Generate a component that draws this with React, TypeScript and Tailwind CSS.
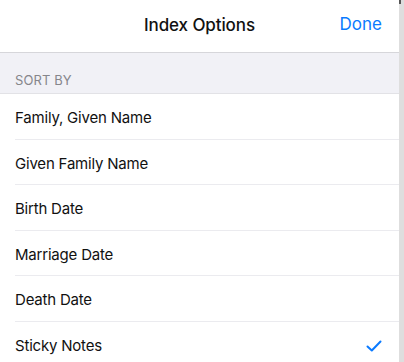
import React from "react";

const options = [
  "Family, Given Name",
  "Given Family Name",
  "Birth Date",
  "Marriage Date",
  "Death Date",
  "Sticky Notes",
];

const selected = "Sticky Notes";

const App: React.FC = () => {
  return (
    <div
      className="flex h-[362px] w-[404px] overflow-hidden bg-white"
      style={{ fontFamily: "Inter, 'Liberation Sans', sans-serif" }}
    >
      <div className="flex w-[399px] flex-col">
        {/* header */}
        <div className="relative flex h-[53px] shrink-0 items-center justify-center border-b border-[#d6d6da] bg-white">
          <span className="text-[17px] font-medium tracking-[-0.1px] text-[#111]">Index Options</span>
          <span className="absolute right-[17px] top-[12px] text-[17px] text-[#0a7aff]">Done</span>
        </div>

        {/* section header */}
        <div className="flex h-[41px] shrink-0 items-end border-b border-[#e2e2e6] bg-[#f1f1f6] pb-[3px] pl-[15px]">
          <span className="text-[13px] uppercase tracking-[0.1px] text-[#86868b]">Sort By</span>
        </div>

        {/* rows */}
        <div className="flex flex-col pl-[15px]">
          {options.map((opt, i) => (
            <div
              key={i}
              className="flex h-[45.5px] shrink-0 items-center justify-between border-b border-[#ebebef] pr-[17px] pt-[4px]"
            >
              <span className="text-[15px] tracking-[-0.2px] text-[#111]">{opt}</span>
              {opt === selected && (
                <svg width="16" height="12" viewBox="0 0 16 12" fill="none">
                  <path
                    d="M1.5 6.5 L5.8 10.5 L14.5 1.5"
                    stroke="#0a7aff"
                    strokeWidth="2"
                    strokeLinecap="round"
                    strokeLinejoin="round"
                  />
                </svg>
              )}
            </div>
          ))}
        </div>
      </div>

      {/* right edge strip */}
      <div className="flex w-[5px] flex-col bg-[#dedede]">
        <div className="h-[4px] w-[2px] bg-[#555]" />
      </div>
    </div>
  );
};

export default App;
